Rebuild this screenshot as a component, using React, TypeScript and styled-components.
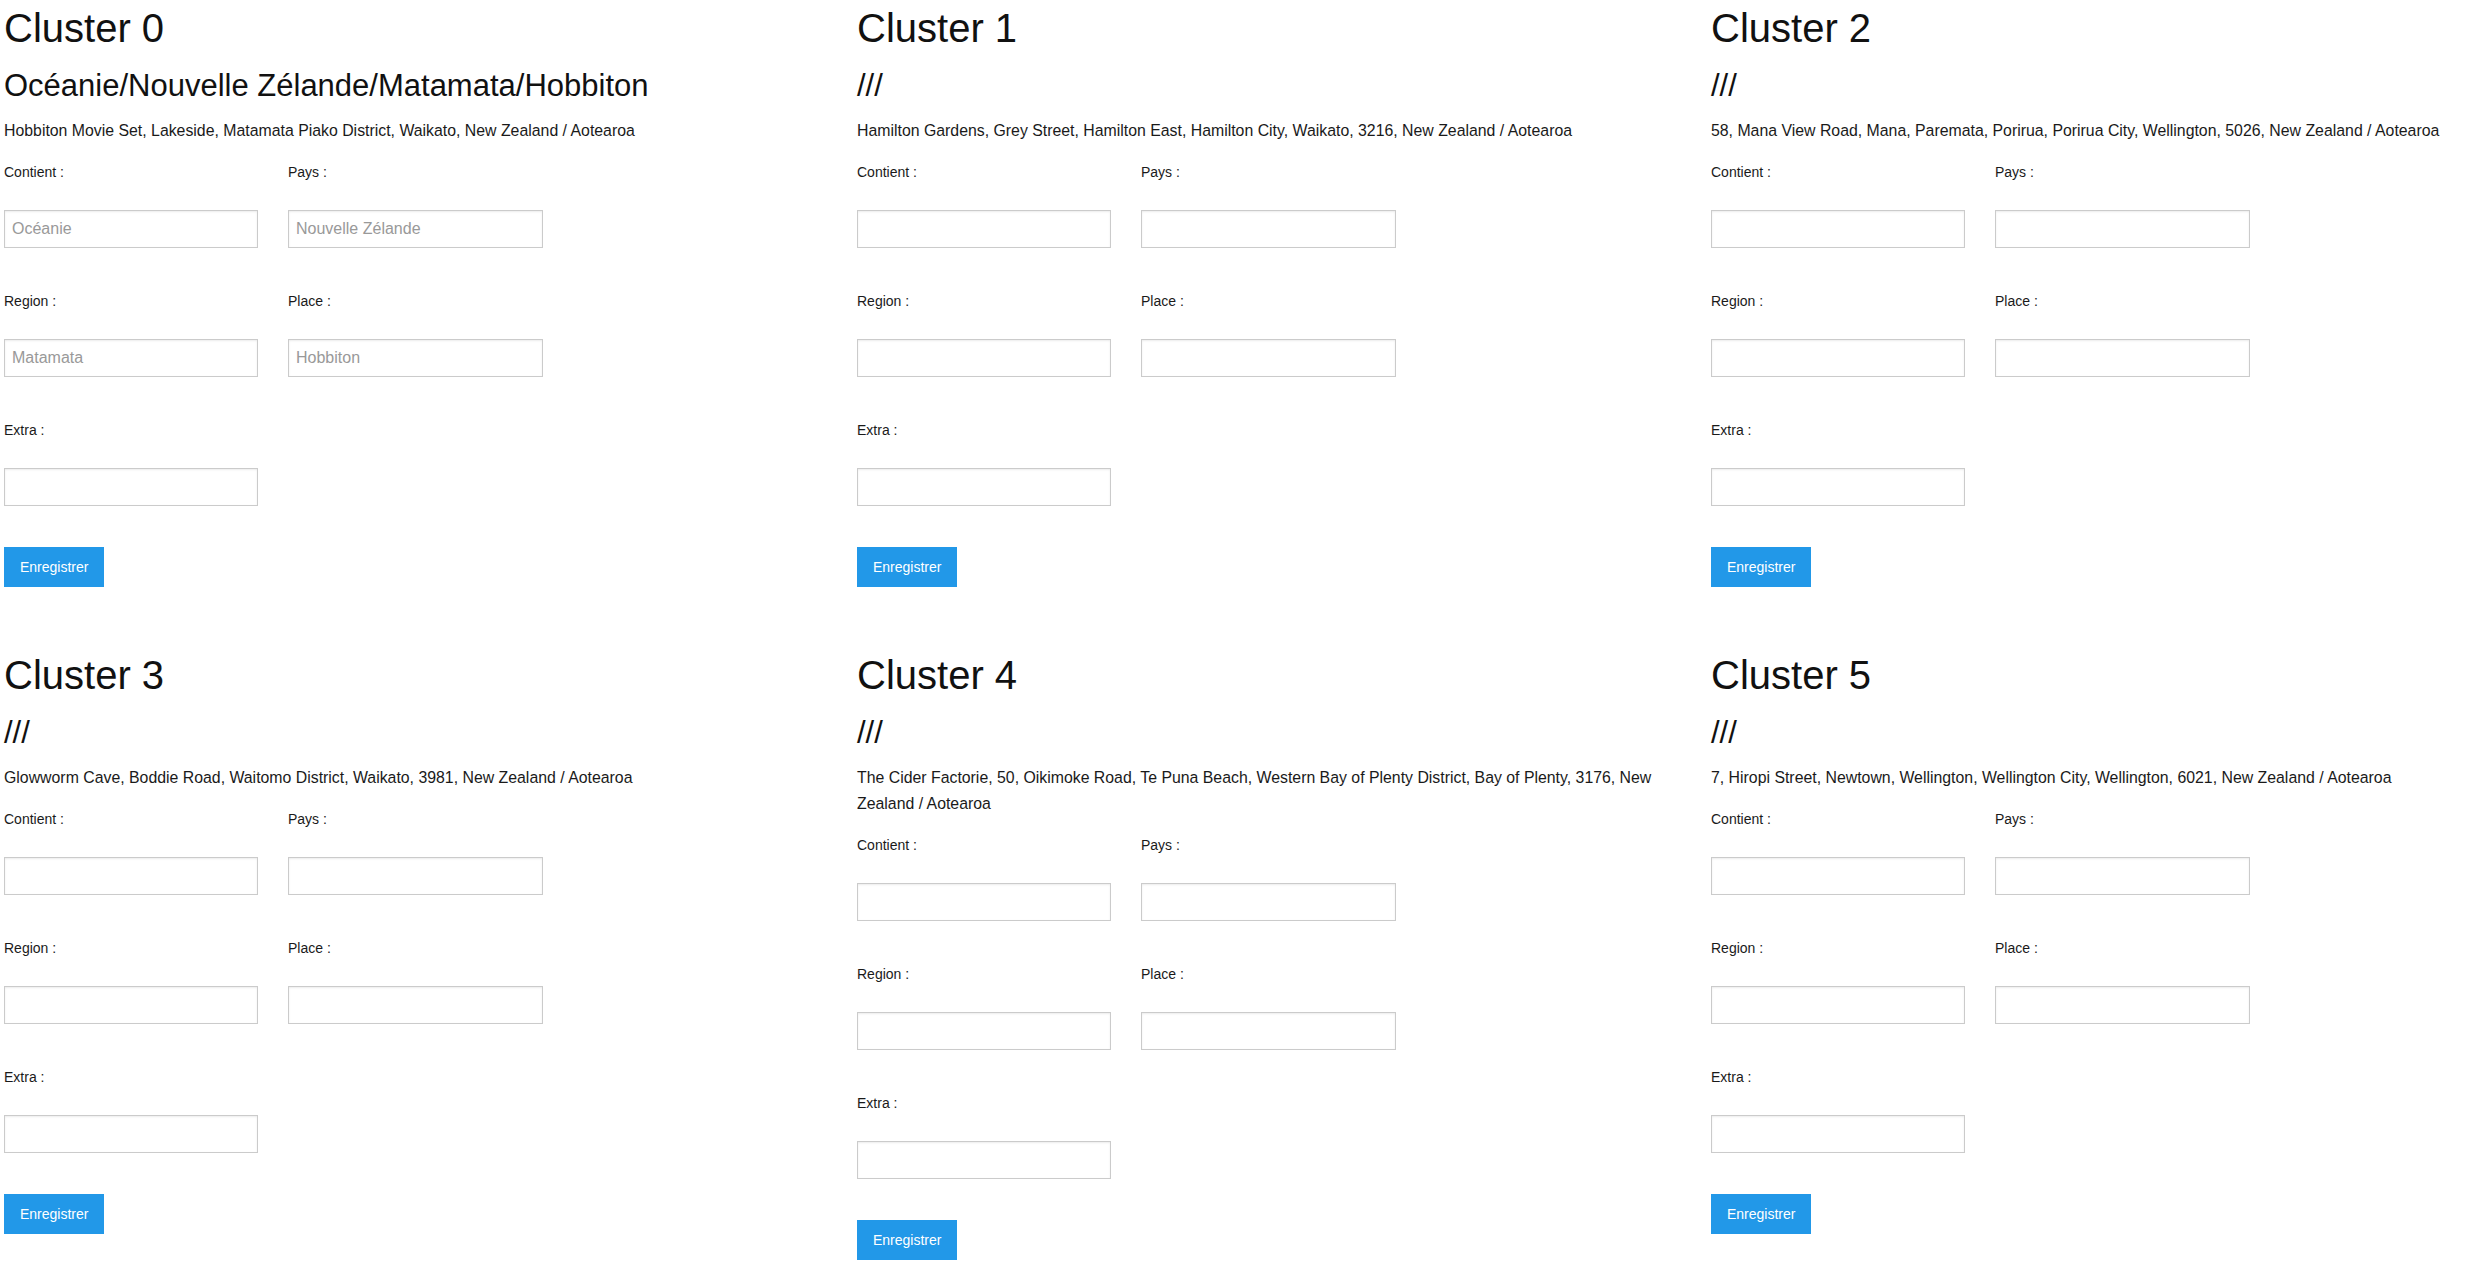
import React from "react";
import styled, { createGlobalStyle } from "styled-components";

const GlobalStyle = createGlobalStyle`
  html, body {
    margin: 0;
    padding: 0;
    background: #ffffff;
  }
  body {
    font-family: "Liberation Sans", Arial, Helvetica, sans-serif;
    color: #111;
  }
  * {
    box-sizing: border-box;
  }
`;

const Page = styled.main`
  display: grid;
  grid-template-columns: 853px 854px minmax(0, 1fr);
  row-gap: 60px;
  align-items: start;
  padding-left: 4px;
`;

const Card = styled.section`
  display: flex;
  flex-direction: column;
  padding-top: 5px;
  min-width: 0;
`;

const Title = styled.h1`
  margin: 0;
  font-size: 40px;
  line-height: 46px;
  font-weight: 400;
  color: #111;
`;

const Path = styled.h2`
  margin: 17px 0 0;
  font-size: 31px;
  line-height: 36px;
  font-weight: 400;
  color: #111;
`;

const Address = styled.p`
  margin: 14px 0 0;
  font-size: 15.85px;
  line-height: 26px;
  color: #1a1a1a;
`;

const Form = styled.form`
  display: flex;
  flex-direction: column;
  align-items: flex-start;
  margin-top: 18px;
`;

const FieldGrid = styled.div`
  display: grid;
  grid-template-columns: 254px 255px;
  column-gap: 30px;
  row-gap: 43px;
`;

const Field = styled.label`
  display: flex;
  flex-direction: column;
`;

const LabelText = styled.span`
  font-size: 14px;
  line-height: 20px;
  color: #1a1a1a;
  margin-bottom: 28px;
`;

const Input = styled.input`
  width: 100%;
  height: 38px;
  margin: 0;
  padding: 0 7px;
  border: 1px solid #cbcbcb;
  border-radius: 0;
  box-shadow: inset 0 1px 2px rgba(0, 0, 0, 0.08);
  background: #fff;
  font-family: "Liberation Sans", Arial, Helvetica, sans-serif;
  font-size: 16px;
  color: #555;
  outline: none;

  &::placeholder {
    color: #999;
    opacity: 1;
  }
`;

const SaveButton = styled.button`
  margin-top: 41px;
  height: 40px;
  padding: 0 16px;
  border: none;
  border-radius: 0;
  background: #2298e8;
  color: #fff;
  font-family: "Liberation Sans", Arial, Helvetica, sans-serif;
  font-size: 14px;
  cursor: pointer;
`;

type Values = {
  continent?: string;
  pays?: string;
  region?: string;
  place?: string;
};

type Cluster = {
  title: string;
  path: string;
  address: string;
  values: Values;
};

const clusters: Cluster[] = [
  {
    title: "Cluster 0",
    path: "Océanie/Nouvelle Zélande/Matamata/Hobbiton",
    address:
      "Hobbiton Movie Set, Lakeside, Matamata Piako District, Waikato, New Zealand / Aotearoa",
    values: {
      continent: "Océanie",
      pays: "Nouvelle Zélande",
      region: "Matamata",
      place: "Hobbiton",
    },
  },
  {
    title: "Cluster 1",
    path: "///",
    address:
      "Hamilton Gardens, Grey Street, Hamilton East, Hamilton City, Waikato, 3216, New Zealand / Aotearoa",
    values: {},
  },
  {
    title: "Cluster 2",
    path: "///",
    address:
      "58, Mana View Road, Mana, Paremata, Porirua, Porirua City, Wellington, 5026, New Zealand / Aotearoa",
    values: {},
  },
  {
    title: "Cluster 3",
    path: "///",
    address:
      "Glowworm Cave, Boddie Road, Waitomo District, Waikato, 3981, New Zealand / Aotearoa",
    values: {},
  },
  {
    title: "Cluster 4",
    path: "///",
    address:
      "The Cider Factorie, 50, Oikimoke Road, Te Puna Beach, Western Bay of Plenty District, Bay of Plenty, 3176, New Zealand / Aotearoa",
    values: {},
  },
  {
    title: "Cluster 5",
    path: "///",
    address:
      "7, Hiropi Street, Newtown, Wellington, Wellington City, Wellington, 6021, New Zealand / Aotearoa",
    values: {},
  },
];

function ClusterCard({ cluster }: { cluster: Cluster }) {
  const v = cluster.values;
  return (
    <Card>
      <Title>{cluster.title}</Title>
      <Path>{cluster.path}</Path>
      <Address>{cluster.address}</Address>
      <Form onSubmit={(e) => e.preventDefault()}>
        <FieldGrid>
          <Field>
            <LabelText>Contient :</LabelText>
            <Input type="text" placeholder={v.continent ?? ""} />
          </Field>
          <Field>
            <LabelText>Pays :</LabelText>
            <Input type="text" placeholder={v.pays ?? ""} />
          </Field>
          <Field>
            <LabelText>Region :</LabelText>
            <Input type="text" placeholder={v.region ?? ""} />
          </Field>
          <Field>
            <LabelText>Place :</LabelText>
            <Input type="text" placeholder={v.place ?? ""} />
          </Field>
          <Field>
            <LabelText>Extra :</LabelText>
            <Input type="text" />
          </Field>
        </FieldGrid>
        <SaveButton type="submit">Enregistrer</SaveButton>
      </Form>
    </Card>
  );
}

export default function App() {
  return (
    <>
      <GlobalStyle />
      <Page>
        {clusters.map((c) => (
          <ClusterCard key={c.title} cluster={c} />
        ))}
      </Page>
    </>
  );
}
